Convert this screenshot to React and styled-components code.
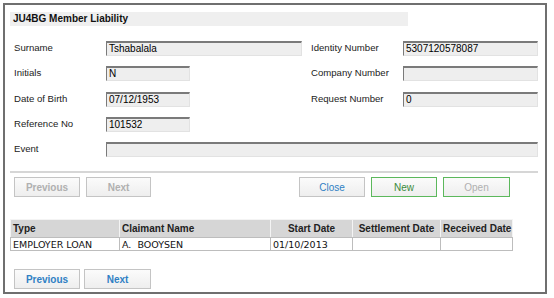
import React from 'react';
import styled, { createGlobalStyle } from 'styled-components';

const GlobalStyle = createGlobalStyle`
  html, body {
    margin: 0;
    padding: 0;
    background: #ffffff;
  }
  body {
    font-family: 'Liberation Sans', Arial, sans-serif;
    color: #222;
  }
`;

const Page = styled.div`
  padding: 3px;
`;

const Frame = styled.div`
  box-sizing: border-box;
  width: 544px;
  height: 291px;
  border: 2px solid #6f6f6f;
  background: #ffffff;
  padding: 7px 5px 0 5px;
`;

const TitleBar = styled.div`
  width: 398px;
  height: 14px;
  line-height: 14px;
  background: #efefef;
  padding-left: 3px;
  box-sizing: border-box;
  font-size: 10px;
  font-weight: bold;
  color: #111;
`;

const FormGrid = styled.div`
  display: grid;
  grid-template-columns: 92px 205px 92px 135px;
  grid-auto-rows: 15px;
  row-gap: 10.25px;
  margin-top: 15px;
  padding-left: 4px;
`;

const Label = styled.div`
  font-size: 9.6px;
  line-height: 12px;
  padding-top: 1px;
  color: #222;
  align-self: start;
  white-space: nowrap;
`;

const Field = styled.div`
  box-sizing: border-box;
  width: ${({ $width }) => $width}px;
  height: 15px;
  grid-column: ${({ $span }) => ($span ? 'span 3' : 'auto')};
  background: #eeeeee;
  border-top: 2px solid #7a7a7a;
  border-left: 1px solid #7a7a7a;
  border-right: 1px solid #e2e2e2;
  border-bottom: 1px solid #e2e2e2;
  padding-left: 2px;
  font-size: 10px;
  line-height: 12px;
  color: #000;
  white-space: nowrap;
  overflow: hidden;
`;

const Empty = styled.div``;

const Separator = styled.div`
  width: 528px;
  height: 2px;
  background: #d6d6d6;
  margin-top: 14px;
`;

const ButtonRow = styled.div`
  display: flex;
  justify-content: space-between;
  width: 528px;
  box-sizing: border-box;
  padding: 0 28px 0 4px;
  margin-top: ${({ $top }) => $top}px;
`;

const ButtonGroup = styled.div`
  display: flex;
  gap: ${({ $gap }) => $gap}px;
`;

const Button = styled.div`
  box-sizing: border-box;
  width: ${({ $width }) => $width || 66}px;
  height: 20px;
  display: flex;
  align-items: center;
  justify-content: center;
  background: linear-gradient(#fbfbfb, #eeeeee);
  border: 1px solid ${({ $green }) => ($green ? '#5cb85c' : '#c4c4c4')};
  font-size: 10px;
  font-weight: ${({ $bold }) => ($bold ? 'bold' : 'normal')};
  color: ${({ $tone }) =>
    $tone === 'blue' ? '#2f80c4' : $tone === 'green' ? '#3b8a3b' : '#b0b0b0'};
`;

const Table = styled.table`
  margin-top: 22px;
  width: 502px;
  border-collapse: collapse;
  table-layout: fixed;
`;

const HeadCell = styled.th`
  height: 17px;
  padding: 0 2px;
  background: #d6d6d6;
  border: 1px solid #f4f4f4;
  border-bottom: 1px solid #bdbdbd;
  font-family: 'Liberation Sans', Arial, sans-serif;
  font-size: 10px;
  font-weight: bold;
  color: #222;
  text-align: ${({ $align }) => $align || 'left'};
  white-space: nowrap;
`;

const Cell = styled.td`
  height: 12px;
  padding: 0 2px;
  border: 1px solid #bdbdbd;
  font-family: 'DejaVu Sans', Verdana, sans-serif;
  font-size: 9.5px;
  line-height: 11px;
  color: #111;
  white-space: pre;
`;

const leftFields = [
  { label: 'Surname', value: 'Tshabalala', width: 196 },
  { label: 'Initials', value: 'N', width: 84 },
  { label: 'Date of Birth', value: '07/12/1953', width: 84 },
  { label: 'Reference No', value: '101532', width: 84 },
];

const rightFields = [
  { label: 'Identity Number', value: '5307120578087' },
  { label: 'Company Number', value: '' },
  { label: 'Request Number', value: '0' },
];

const columns = [
  { title: 'Type', width: 109 },
  { title: 'Claimant Name', width: 151 },
  { title: 'Start Date', width: 82, align: 'center' },
  { title: 'Settlement Date', width: 88, align: 'center' },
  { title: 'Received Date', width: 72, align: 'center' },
];

const rows = [['EMPLOYER LOAN', 'A.  BOOYSEN', '01/10/2013', '', '']];

export default function App() {
  return (
    <Page>
      <GlobalStyle />
      <Frame>
        <TitleBar>JU4BG Member Liability</TitleBar>

        <FormGrid>
          {leftFields.map((f, i) => (
            <React.Fragment key={f.label}>
              <Label>{f.label}</Label>
              <Field $width={f.width}>{f.value}</Field>
              {rightFields[i] ? (
                <>
                  <Label>{rightFields[i].label}</Label>
                  <Field $width={135}>{rightFields[i].value}</Field>
                </>
              ) : (
                <>
                  <Empty />
                  <Empty />
                </>
              )}
            </React.Fragment>
          ))}
          <Label>Event</Label>
          <Field $width={432} $span />
        </FormGrid>

        <Separator />

        <ButtonRow $top={4}>
          <ButtonGroup $gap={6}>
            <Button $bold>Previous</Button>
            <Button $bold $width={65}>Next</Button>
          </ButtonGroup>
          <ButtonGroup $gap={6}>
            <Button $tone="blue">Close</Button>
            <Button $green $tone="green">New</Button>
            <Button $green $width={67}>Open</Button>
          </ButtonGroup>
        </ButtonRow>

        <Table>
          <colgroup>
            {columns.map((c) => (
              <col key={c.title} style={{ width: c.width }} />
            ))}
          </colgroup>
          <thead>
            <tr>
              {columns.map((c) => (
                <HeadCell key={c.title} $align={c.align}>
                  {c.title}
                </HeadCell>
              ))}
            </tr>
          </thead>
          <tbody>
            {rows.map((r, i) => (
              <tr key={i}>
                {r.map((v, j) => (
                  <Cell key={j}>{v}</Cell>
                ))}
              </tr>
            ))}
          </tbody>
        </Table>

        <ButtonRow $top={18}>
          <ButtonGroup $gap={4}>
            <Button $bold $tone="blue">Previous</Button>
            <Button $bold $tone="blue" $width={67}>Next</Button>
          </ButtonGroup>
        </ButtonRow>
      </Frame>
    </Page>
  );
}
